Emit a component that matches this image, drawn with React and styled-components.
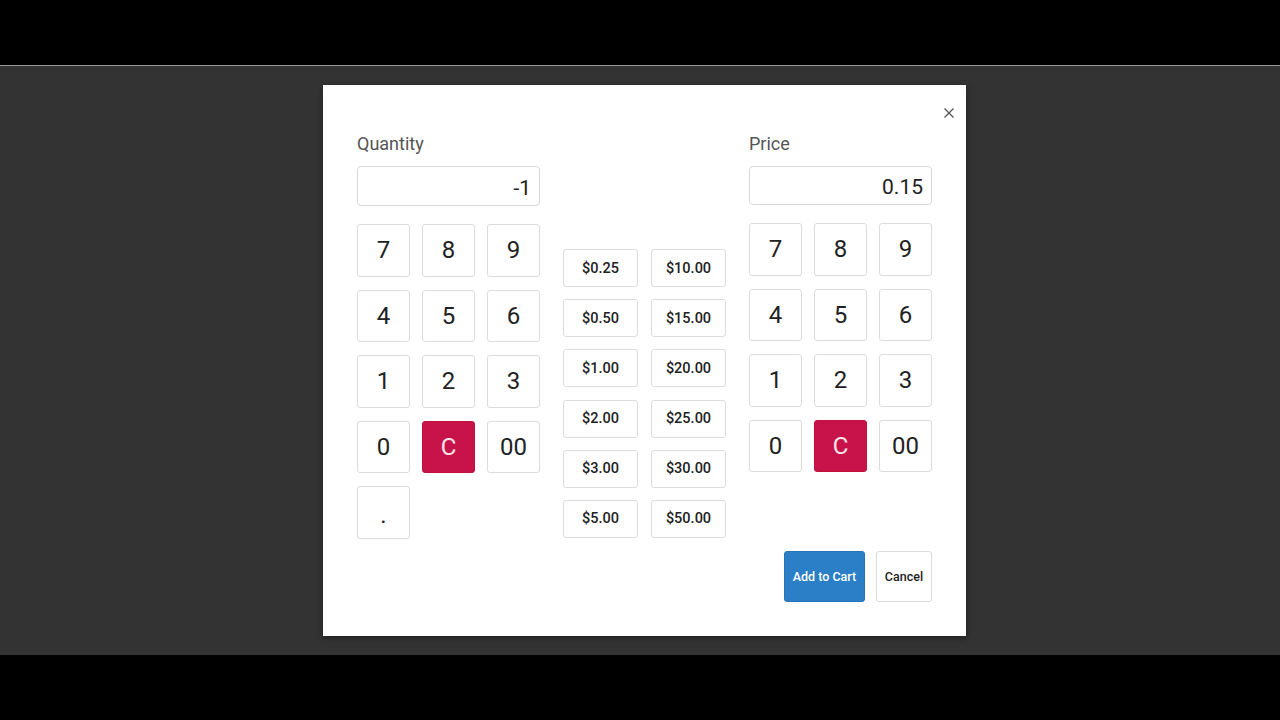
import React from 'react'
import styled, { createGlobalStyle } from 'styled-components'

const GlobalStyle = createGlobalStyle`
	html, body {
		margin: 0;
		padding: 0;
		background: #000;
		font-family: Roboto, "Liberation Sans", Arial, sans-serif;
	}
`

const keys = ['7', '8', '9', '4', '5', '6', '1', '2', '3', '0', 'C', '00']
const amounts = ['$0.25', '$10.00', '$0.50', '$15.00', '$1.00', '$20.00', '$2.00', '$25.00', '$3.00', '$30.00', '$5.00', '$50.00']

const Keypad = ({ withDot }) => (
	<KeyGrid>
		{keys.map(k => (
			<Key key={k} danger={k === 'C'}>{k}</Key>
		))}
		{withDot && <Key dot>.</Key>}
	</KeyGrid>
)

const App = () => (
	<>
		<GlobalStyle />
		<Screen>
			<Letterbox />
			<Stage>
				<Modal>
					<Close aria-label="close">
						<svg width="12" height="12" viewBox="0 0 12 12">
							<path d="M1.5 1.5 L10.5 10.5 M10.5 1.5 L1.5 10.5" stroke="#555" strokeWidth="1.3" />
						</svg>
					</Close>
					<Column>
						<Label>Quantity</Label>
						<Display>-1</Display>
						<Keypad withDot />
					</Column>
					<Middle>
						<MoneyGrid>
							{amounts.map(a => (
								<Money key={a}>{a}</Money>
							))}
						</MoneyGrid>
					</Middle>
					<Column>
						<Label>Price</Label>
						<Display>0.15</Display>
						<Keypad />
						<Actions>
							<Primary>Add to Cart</Primary>
							<Secondary>Cancel</Secondary>
						</Actions>
					</Column>
				</Modal>
			</Stage>
			<Letterbox />
		</Screen>
	</>
)

const Screen = styled.div`
	width: 1280px;
	height: 720px;
	display: flex;
	flex-direction: column;
	background: #000;
`

const Letterbox = styled.div`
	height: 65px;
	background: #000;
	flex: none;
`

const Stage = styled.div`
	flex: 1;
	background: #333;
	border-top: 1px solid #9a9a9a;
	display: flex;
	justify-content: center;
	padding-top: 19px;
	padding-left: 9px;
`

const Modal = styled.div`
	position: relative;
	align-self: flex-start;
	width: 643px;
	height: 551px;
	box-sizing: border-box;
	background: #fff;
	padding: 49px 34px 34px;
	display: flex;
	gap: 23px;
	box-shadow: 0 2px 6px rgba(0, 0, 0, 0.4);
`

const Close = styled.button`
	position: absolute;
	top: 22px;
	right: 11px;
	width: 12px;
	height: 12px;
	padding: 0;
	border: none;
	background: none;
	display: flex;
	cursor: pointer;
`

const Column = styled.div`
	width: 183px;
	display: flex;
	flex-direction: column;
`

const Label = styled.div`
	font-size: 18px;
	color: #555;
	line-height: 20px;
	height: 20px;
	margin-bottom: 12px;
`

const Display = styled.div`
	height: 40px;
	box-sizing: border-box;
	border: 1px solid #d8d8d8;
	border-radius: 4px;
	display: flex;
	align-items: center;
	justify-content: flex-end;
	padding: 3px 8px 0 0;
	font-size: 21px;
	color: #222;
	margin-bottom: 18px;
`

const KeyGrid = styled.div`
	display: grid;
	grid-template-columns: repeat(3, 53px);
	grid-auto-rows: 52.5px;
	column-gap: 12px;
	row-gap: 13px;
`

const Key = styled.button`
	box-sizing: border-box;
	border: 1px solid ${({ danger }) => (danger ? '#c0113f' : '#dcdcdc')};
	border-radius: 3px;
	background: ${({ danger }) => (danger ? '#c8134a' : '#fff')};
	color: ${({ danger }) => (danger ? '#fbe3ea' : '#222')};
	font-family: Roboto, "Liberation Sans", Arial, sans-serif;
	font-size: 24px;
	padding: 0;
	padding-top: ${({ dot }) => (dot ? '6px' : '0')};
	display: flex;
	align-items: center;
	justify-content: center;
	cursor: pointer;
`

const Middle = styled.div`
	width: 163px;
	padding-top: 115px;
`

const MoneyGrid = styled.div`
	display: grid;
	grid-template-columns: repeat(2, 75px);
	grid-auto-rows: 38px;
	column-gap: 13px;
	row-gap: 12.2px;
`

const Money = styled.button`
	box-sizing: border-box;
	border: 1px solid #dcdcdc;
	border-radius: 3px;
	background: #fff;
	color: #222;
	font-family: Roboto, "Liberation Sans", Arial, sans-serif;
	font-size: 14.5px;
	font-weight: 500;
	padding: 0;
	cursor: pointer;
`

const Actions = styled.div`
	margin-top: 79px;
	display: flex;
	justify-content: flex-end;
	gap: 11px;
`

const Primary = styled.button`
	width: 81px;
	height: 51px;
	border: 1px solid #2574b8;
	border-radius: 3px;
	background: #2a7fc6;
	color: #fff;
	font-family: Roboto, "Liberation Sans", Arial, sans-serif;
	font-size: 12.5px;
	font-weight: 500;
	padding: 0;
	cursor: pointer;
`

const Secondary = styled(Primary)`
	width: 56px;
	border-color: #dcdcdc;
	background: #fff;
	color: #222;
`

export default App
